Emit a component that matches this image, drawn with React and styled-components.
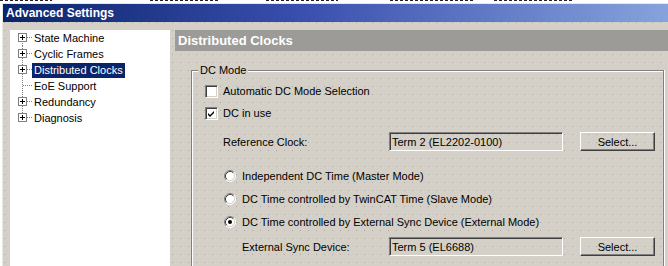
import React from 'react'
import styled, { createGlobalStyle } from 'styled-components'

const Global = createGlobalStyle`
  html, body { margin: 0; padding: 0; background: #fff; }
  body { font-family: "Liberation Sans", Arial, sans-serif; font-size: 11px; color: #000; }
`

const Screen = styled.div`
  width: 668px;
  height: 266px;
  overflow: hidden;
  background: #fff;
`

// bits of the window lying behind the dialog, only their bottom pixels show
const Behind = styled.div`
  height: 3px;
  display: flex;
  align-items: flex-start;
`

const Scrap = styled.span`
  display: block;
  flex: none;
  width: ${p => p.$w}px;
  margin-left: ${p => p.$ml || 0}px;
  height: 1px;
  background: repeating-linear-gradient(to right, #222 0 3px, transparent 3px 5px);
`

const Window = styled.div`
  margin-left: 2px;
  border-top: 1px solid #e8e6e0;
  border-left: 1px solid #e8e6e0;
  height: 263px;
  display: flex;
  flex-direction: column;
`

const TitleBar = styled.div`
  height: 18px;
  flex: none;
  display: flex;
  align-items: center;
  padding-left: 3px;
  background: linear-gradient(to right, #0a246a 0%, #3a4fae 45%, #86a3dc 100%);
  color: #fff;
  font-weight: bold;
  font-size: 12px;
`

const Body = styled.div`
  flex: 1;
  display: flex;
  gap: 5px;
  padding: 8px 0 0 7px;
  min-height: 0;
  background-color: #d4d0c8;
  background-image:
    linear-gradient(to right, #d4d0c8 7px, transparent 7px),
    linear-gradient(to bottom, #d4d0c8 7px, #aca89f 7px);
  background-size: 8px 8px;
  background-position: 2px 1px;
`

const Tree = styled.div`
  width: 160px;
  flex: none;
  background: #fff;
  display: flex;
  flex-direction: column;
`

const TreeRow = styled.div`
  height: 16px;
  display: flex;
  align-items: center;
`

const TreeLabel = styled.span`
  height: 15px;
  line-height: 15px;
  padding: 0 2px;
  white-space: nowrap;
  background: ${p => (p.$selected ? '#0a246a' : 'transparent')};
  color: ${p => (p.$selected ? '#fff' : '#000')};
`

const Main = styled.div`
  flex: 1;
  display: flex;
  flex-direction: column;
  min-width: 0;
`

const Header = styled.div`
  height: 21px;
  flex: none;
  display: flex;
  align-items: center;
  padding-left: 3px;
  background: #9c9b97;
  color: #fff;
  font-weight: bold;
  font-size: 13px;
`

const GroupBox = styled.div`
  position: relative;
  margin: 19px 4px 0 16px;
  flex: 1;
  border: 1px solid #808080;
  border-bottom: none;
  box-shadow: inset 1px 1px #fff, 1px 0 #fff;
  padding: 12px 0 0 13px;
  display: flex;
  flex-direction: column;
`

const Legend = styled.span`
  position: absolute;
  top: -7px;
  left: 6px;
  padding: 0 2px;
  line-height: 13px;
  background: #d4d0c8;
`

const Row = styled.div`
  display: flex;
  align-items: center;
  height: ${p => p.$h || 16}px;
  margin-top: ${p => p.$mt || 0}px;
  padding-left: ${p => p.$indent || 0}px;
  white-space: nowrap;
`

const CheckBox = styled.span`
  width: 11px;
  height: 11px;
  flex: none;
  display: flex;
  border: 1px solid;
  border-color: #808080 #fff #fff #808080;
  box-shadow: inset 1px 1px #404040, inset -1px -1px #d4d0c8;
  background: #fff;
  margin-right: 5px;
`

const FieldLabel = styled.span`
  width: ${p => p.$w}px;
  flex: none;
`

const Field = styled.div`
  width: 172px;
  height: 17px;
  flex: none;
  box-sizing: content-box;
  border: 1px solid;
  border-color: #808080 #fff #fff #808080;
  box-shadow: inset 1px 1px #404040, inset -1px -1px #d4d0c8;
  display: flex;
  align-items: center;
  text-indent: 2px;
`

const Button = styled.div`
  width: 73px;
  height: 17px;
  flex: none;
  margin-left: 17px;
  border: 1px solid;
  border-color: #fff #404040 #404040 #fff;
  box-shadow: inset -1px -1px #808080, inset 1px 1px #d4d0c8;
  display: flex;
  align-items: center;
  justify-content: center;
`

const RadioText = styled.span`
  margin-left: 6px;
`

function TreeLines({ expandable, first, last }) {
  return (
    <svg width="22" height="16" style={{ flex: 'none' }} shapeRendering="crispEdges">
      <line
        x1="12.5"
        y1={first ? 7 : 0}
        x2="12.5"
        y2={last ? 8 : 16}
        stroke="#808080"
        strokeDasharray="1 1"
      />
      <line x1={expandable ? 17 : 13} y1="7.5" x2="22" y2="7.5" stroke="#808080" strokeDasharray="1 1" />
      {expandable && (
        <>
          <rect x="8.5" y="3.5" width="8" height="8" fill="#fff" stroke="#808080" />
          <line x1="10" y1="7.5" x2="15" y2="7.5" stroke="#000" />
          <line x1="12.5" y1="5" x2="12.5" y2="10" stroke="#000" />
        </>
      )}
    </svg>
  )
}

function Radio({ checked }) {
  return (
    <svg width="12" height="12" style={{ flex: 'none' }}>
      <circle cx="6" cy="6" r="5" fill="#fff" />
      <path d="M2.11 9.89 A5.5 5.5 0 0 1 9.89 2.11" fill="none" stroke="#808080" />
      <path d="M9.89 2.11 A5.5 5.5 0 0 1 2.11 9.89" fill="none" stroke="#fff" />
      <path d="M2.82 9.18 A4.5 4.5 0 0 1 9.18 2.82" fill="none" stroke="#404040" />
      <path d="M9.18 2.82 A4.5 4.5 0 0 1 2.82 9.18" fill="none" stroke="#d4d0c8" />
      {checked && <circle cx="6" cy="6" r="2" fill="#000" />}
    </svg>
  )
}

const treeItems = [
  { label: 'State Machine', expandable: true },
  { label: 'Cyclic Frames', expandable: true },
  { label: 'Distributed Clocks', expandable: true, selected: true },
  { label: 'EoE Support', expandable: false },
  { label: 'Redundancy', expandable: true },
  { label: 'Diagnosis', expandable: true },
]

const scraps = [
  { w: 52, ml: 0 },
  { w: 68, ml: 98 },
  { w: 72, ml: 48 },
  { w: 84, ml: 52 },
  { w: 80, ml: 20 },
]

export default function App() {
  return (
    <>
      <Global />
      <Screen>
        <Behind>
          {scraps.map((s, i) => (
            <Scrap key={i} $w={s.w} $ml={s.ml} />
          ))}
        </Behind>
        <Window>
          <TitleBar>Advanced Settings</TitleBar>
          <Body>
            <Tree>
              {treeItems.map((it, i) => (
                <TreeRow key={it.label}>
                  <TreeLines expandable={it.expandable} first={i === 0} last={i === treeItems.length - 1} />
                  <TreeLabel $selected={it.selected}>{it.label}</TreeLabel>
                </TreeRow>
              ))}
            </Tree>
            <Main>
              <Header>Distributed Clocks</Header>
              <GroupBox>
                <Legend>DC Mode</Legend>
                <Row>
                  <CheckBox />
                  Automatic DC Mode Selection
                </Row>
                <Row $mt={6}>
                  <CheckBox>
                    <svg width="11" height="11">
                      <path d="M2 5 L4 7 L8 3 L8 5 L4 9 L2 7 Z" fill="#000" />
                    </svg>
                  </CheckBox>
                  DC in use
                </Row>
                <Row $mt={11} $h={19} $indent={18}>
                  <FieldLabel $w={166}>Reference Clock:</FieldLabel>
                  <Field>Term 2 (EL2202-0100)</Field>
                  <Button>Select...</Button>
                </Row>
                <Row $mt={17} $indent={19}>
                  <Radio />
                  <RadioText>Independent DC Time (Master Mode)</RadioText>
                </Row>
                <Row $mt={7} $indent={19}>
                  <Radio />
                  <RadioText>DC Time controlled by TwinCAT Time (Slave Mode)</RadioText>
                </Row>
                <Row $mt={7} $indent={19}>
                  <Radio checked />
                  <RadioText>DC Time controlled by External Sync Device (External Mode)</RadioText>
                </Row>
                <Row $mt={7} $h={19} $indent={37}>
                  <FieldLabel $w={147}>External Sync Device:</FieldLabel>
                  <Field>Term 5 (EL6688)</Field>
                  <Button>Select...</Button>
                </Row>
              </GroupBox>
            </Main>
          </Body>
        </Window>
      </Screen>
    </>
  )
}
